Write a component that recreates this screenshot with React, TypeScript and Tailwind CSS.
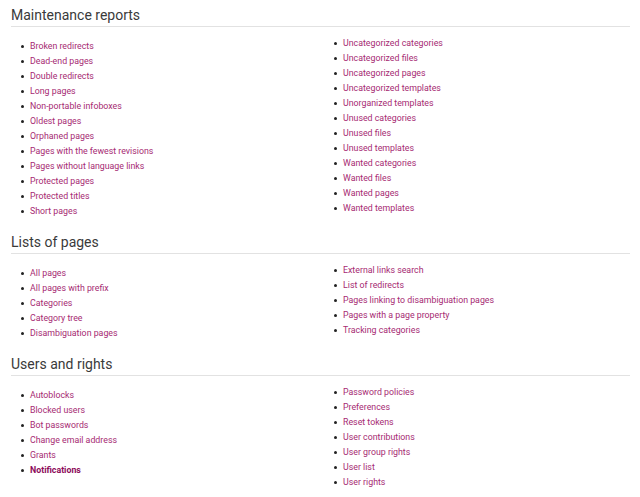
import React from "react";

type Item = { label: string; bold?: boolean };

const sections: { title: string; left: Item[]; right: Item[] }[] = [
  {
    title: "Maintenance reports",
    left: [
      "Broken redirects",
      "Dead-end pages",
      "Double redirects",
      "Long pages",
      "Non-portable infoboxes",
      "Oldest pages",
      "Orphaned pages",
      "Pages with the fewest revisions",
      "Pages without language links",
      "Protected pages",
      "Protected titles",
      "Short pages",
    ].map((label) => ({ label })),
    right: [
      "Uncategorized categories",
      "Uncategorized files",
      "Uncategorized pages",
      "Uncategorized templates",
      "Unorganized templates",
      "Unused categories",
      "Unused files",
      "Unused templates",
      "Wanted categories",
      "Wanted files",
      "Wanted pages",
      "Wanted templates",
    ].map((label) => ({ label })),
  },
  {
    title: "Lists of pages",
    left: [
      "All pages",
      "All pages with prefix",
      "Categories",
      "Category tree",
      "Disambiguation pages",
    ].map((label) => ({ label })),
    right: [
      "External links search",
      "List of redirects",
      "Pages linking to disambiguation pages",
      "Pages with a page property",
      "Tracking categories",
    ].map((label) => ({ label })),
  },
  {
    title: "Users and rights",
    left: [
      { label: "Autoblocks" },
      { label: "Blocked users" },
      { label: "Bot passwords" },
      { label: "Change email address" },
      { label: "Grants" },
      { label: "Notifications", bold: true },
    ],
    right: [
      "Password policies",
      "Preferences",
      "Reset tokens",
      "User contributions",
      "User group rights",
      "User list",
      "User rights",
    ].map((label) => ({ label })),
  },
];

function List({ items, className }: { items: Item[]; className: string }) {
  return (
    <ul className={className}>
      {items.map((it) => (
        <li key={it.label} className="flex items-center h-[15px] pl-[10px]">
          <span className="w-[3px] h-[3px] rounded-full bg-[#222] shrink-0" />
          <a
            href="#"
            className={
              it.bold
                ? "ml-[6px] text-[#8c0a5a] font-bold"
                : "ml-[6px] text-[#a62a72]"
            }
          >
            {it.label}
          </a>
        </li>
      ))}
    </ul>
  );
}

export default function App() {
  return (
    <div
      className="bg-white w-[640px] h-[497px] overflow-hidden pl-[11px] pr-[10px] pt-[4px]"
      style={{ fontFamily: "Roboto, 'Liberation Sans', sans-serif" }}
    >
      {sections.map((s, i) => (
        <section key={s.title} className={i === 0 ? "" : "mt-[12px]"}>
          <h2 className="text-[14px] leading-[22px] text-[#3a3a3a] border-b border-[#e2e2e2]">
            {s.title}
          </h2>
          <div className="flex text-[8.8px] leading-[15px]">
            <List items={s.left} className="w-[313px] pt-[12px]" />
            <List items={s.right} className="flex-1 pt-[9px]" />
          </div>
        </section>
      ))}
    </div>
  );
}
